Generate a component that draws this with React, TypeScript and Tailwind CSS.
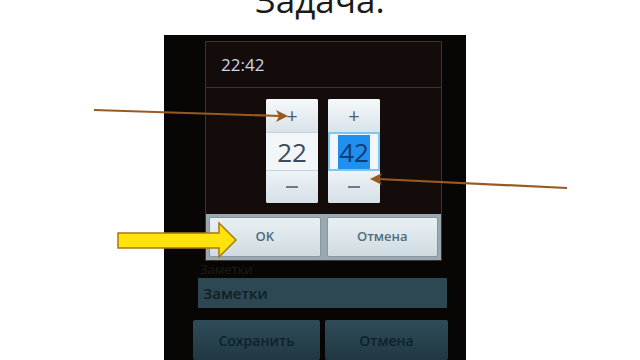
const font = { fontFamily: '"Open Sans", "Noto Sans", sans-serif' };

function PickerColumn({ value, active = false }: { value: string; active?: boolean }) {
  return (
    <div className="flex w-[52px] flex-col self-start overflow-hidden rounded-[2px] bg-[#e9eff3]">
      <div className="flex h-[33px] items-center justify-center bg-gradient-to-b from-[#f6f9fb] to-[#d9e3e9] text-[20px] leading-none text-[#4d5d6b]">
        +
      </div>
      <div
        className={`flex h-[39px] items-center justify-center bg-[#f3f6f8] ${
          active ? "border-2 border-[#7cc6f2]" : "border-y border-[#c6d3db]"
        }`}
      >
        <span
          className={`px-[1px] text-[26px] leading-[34px] ${
            active ? "bg-[#1f8ff0] text-[#123a74]" : "text-[#3c4c5c]"
          }`}
        >
          {value}
        </span>
      </div>
      <div className="flex h-[32px] items-center justify-center bg-gradient-to-b from-[#eef3f6] to-[#d6e0e6]">
        <div className="h-[2px] w-[12px] bg-[#6d7c88]" />
      </div>
    </div>
  );
}

export default function App() {
  return (
    <div className="relative h-[360px] w-[640px] overflow-hidden bg-white" style={font}>
      {/* slide title, cut at the top */}
      <div className="h-[35px] overflow-hidden">
        <p className="mt-[-18px] text-center text-[35px] leading-[36px] text-[#1a1a1a]">Задача.</p>
      </div>

      {/* phone photo */}
      <div className="ml-[164px] flex h-[325px] w-[302px] flex-col bg-[#080605] pt-[6px]">
        <div className="ml-[41px] flex w-[237px] flex-col border border-[#3b3431] bg-[#130c0a]">
          <div className="flex h-[46px] items-center border-b border-[#3a3431] pl-[15px]">
            <span className="text-[17px] font-medium text-[#c9d8e6]">22:42</span>
          </div>
          <div className="flex h-[126px] items-start gap-[10px] pl-[60px] pt-[11px]">
            <PickerColumn value="22" />
            <PickerColumn value="42" active />
          </div>
          <div className="flex h-[46px] gap-[6px] bg-[#9aa9b0] px-[3px] py-[3px]">
            <div className="flex flex-1 items-center justify-center rounded-[2px] border border-[#8797a0] bg-gradient-to-b from-[#e9f0f3] to-[#cfdbe1] text-[13px] font-semibold text-[#4f6c80]">
              OK
            </div>
            <div className="flex flex-1 items-center justify-center rounded-[2px] border border-[#8797a0] bg-gradient-to-b from-[#e9f0f3] to-[#cfdbe1] text-[13px] font-semibold text-[#4f6c80]">
              Отмена
            </div>
          </div>
        </div>

        <p className="ml-[36px] h-[17px] text-[13px] leading-[17px] text-[#1f1a18]">Заметки</p>

        <div className="ml-[34px] flex h-[35px] w-[249px] items-center bg-[#2d4852] pl-[5px]">
          <span className="text-[15px] font-semibold text-[#0f2028]">Заметки</span>
        </div>

        <div className="ml-[29px] mt-[12px] flex gap-[5px]">
          <div className="flex h-[40px] w-[127px] items-center justify-center rounded-[2px] bg-gradient-to-b from-[#2f4c57] to-[#203844] text-[14px] font-semibold text-[#0f222b]">
            Сохранить
          </div>
          <div className="flex h-[40px] w-[123px] items-center justify-center rounded-[2px] bg-gradient-to-b from-[#2f4c57] to-[#203844] text-[14px] font-semibold text-[#0f222b]">
            Отмена
          </div>
        </div>
      </div>

      {/* annotation arrows drawn over the slide */}
      <svg className="pointer-events-none absolute left-0 top-0" width="640" height="360" viewBox="0 0 640 360">
        <line x1="94" y1="110" x2="280" y2="116" stroke="#9a5a1f" strokeWidth="2.2" />
        <path d="M288 116 L276 110 L279 116 L276 122 Z" fill="#9a5a1f" />
        <line x1="567" y1="188" x2="378" y2="179" stroke="#9a5a1f" strokeWidth="2.2" />
        <path d="M370 179 L382 173 L379 179 L382 185 Z" fill="#9a5a1f" />
        <path
          d="M118 233 L219 233 L219 223 L236 240 L219 257 L219 248 L118 248 Z"
          fill="#ffe30a"
          stroke="#a7790f"
          strokeWidth="1.5"
          strokeLinejoin="miter"
        />
      </svg>
    </div>
  );
}
